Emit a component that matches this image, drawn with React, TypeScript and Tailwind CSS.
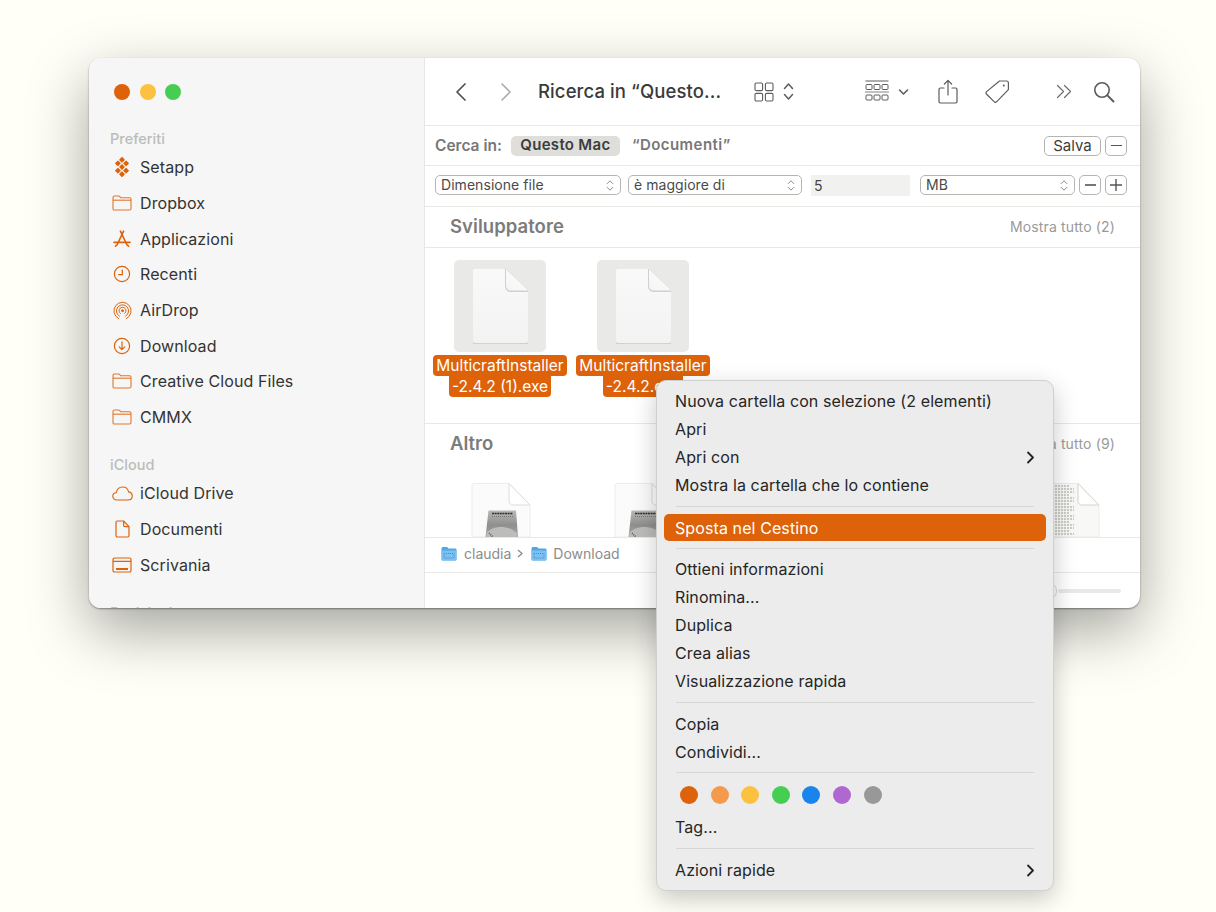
import React from "react";

const O = "#dd6209";

const Folder = () => (
  <svg width="20" height="16" viewBox="0 0 20 16" fill="none" stroke={O} strokeWidth="1.1" opacity="0.85">
    <path d="M1 13.5V2.5C1 1.7 1.6 1 2.4 1H6.5C7.2 1 7.6 1.3 8 1.8L8.7 2.8H17.6C18.4 2.8 19 3.4 19 4.2V13.5C19 14.3 18.4 15 17.6 15H2.4C1.6 15 1 14.3 1 13.5Z" />
    <path d="M1 5.2H19" />
  </svg>
);
const Setapp = () => (
  <svg width="16" height="20" viewBox="0 0 16 20" fill={O}>
    {[[8, 2.8], [3.9, 6.4], [12.1, 6.4], [8, 10], [3.9, 13.6], [12.1, 13.6], [8, 17.2]].map(([x, y], i) => (
      <rect key={i} x={x - 2.15} y={y - 2.15} width="4.3" height="4.3" rx="0.5" transform={`rotate(45 ${x} ${y})`} />
    ))}
  </svg>
);
const Apps = () => (
  <svg width="18" height="18" viewBox="0 0 18 18" fill="none" stroke={O} strokeWidth="1.6" strokeLinecap="round">
    <path d="M7.4 1.2 14 15" />
    <path d="M10.6 1.2 4 15" />
    <path d="M1 12.4H17" />
    <path d="M2.4 16.2 3.2 15.4M15.6 16.2 14.8 15.4" />
  </svg>
);
const Clock = () => (
  <svg width="18" height="18" viewBox="0 0 18 18" fill="none" stroke={O} strokeWidth="1.2">
    <circle cx="9" cy="9" r="7.6" />
    <path d="M9.3 4.5V9.6H5.2" />
  </svg>
);
const AirDrop = () => (
  <svg width="19" height="19" viewBox="0 0 19 19" fill="none" stroke={O} strokeWidth="1" strokeLinecap="round">
    <path d="M5.6 17.6A8.6 8.6 0 1 1 13.4 17.6" />
    <path d="M6.4 15.2A6.1 6.1 0 1 1 12.6 15.2" />
    <path d="M7.4 12.6A3.5 3.5 0 1 1 11.6 12.6" />
    <circle cx="9.5" cy="9.7" r="1" fill={O} />
  </svg>
);
const DownloadIco = () => (
  <svg width="18" height="18" viewBox="0 0 18 18" fill="none" stroke={O} strokeWidth="1.2" strokeLinecap="round" strokeLinejoin="round">
    <circle cx="9" cy="9" r="7.6" />
    <path d="M9 4.8V12.6M6.2 9.9 9 12.7 11.8 9.9" />
  </svg>
);
const Cloud = () => (
  <svg width="21" height="15" viewBox="0 0 21 15" fill="none" stroke={O} strokeWidth="1.1">
    <path d="M5 14C2.6 14 .8 12.4 .8 10.3 .8 8.3 2.3 6.9 4.2 6.8 5 3.2 7.6 1 10.7 1 13.6 1 15.9 3 16.6 5.9 18.6 6.2 20.2 7.9 20.2 10 20.2 12.3 18.4 14 16 14Z" />
  </svg>
);
const Doc = () => (
  <svg width="15" height="18" viewBox="0 0 15 18" fill="none" stroke={O} strokeWidth="1.2" strokeLinejoin="round">
    <path d="M1 2.4C1 1.6 1.6 1 2.4 1H8.6L14 6.6V15.6C14 16.4 13.4 17 12.6 17H2.4C1.6 17 1 16.4 1 15.6Z" />
    <path d="M8.6 1V5.2C8.6 6 9.2 6.6 10 6.6H14" />
  </svg>
);
const Desk = () => (
  <svg width="20" height="16" viewBox="0 0 20 16" fill="none" stroke={O} strokeWidth="1.2">
    <rect x="1" y="1" width="18" height="14" rx="1.6" />
    <path d="M1 4.4H19" />
    <path d="M4 12H16" strokeWidth="1.8" />
  </svg>
);

const favorites: [React.ReactNode, string][] = [
  [<Setapp />, "Setapp"],
  [<Folder />, "Dropbox"],
  [<Apps />, "Applicazioni"],
  [<Clock />, "Recenti"],
  [<AirDrop />, "AirDrop"],
  [<DownloadIco />, "Download"],
  [<Folder />, "Creative Cloud Files"],
  [<Folder />, "CMMX"],
];
const icloud: [React.ReactNode, string][] = [
  [<Cloud />, "iCloud Drive"],
  [<Doc />, "Documenti"],
  [<Desk />, "Scrivania"],
];

const SideRow = ({ icon, label }: { icon: React.ReactNode; label: string }) => (
  <div className="flex h-[35.7px] items-center">
    <div className="flex w-[24px] -ml-[3px] mr-[6px] justify-center">{icon}</div>
    <span className="text-[16px] text-[#333333] tracking-[0.1px]">{label}</span>
  </div>
);

const Updown = () => (
  <svg width="8" height="13" viewBox="0 0 8 13" fill="none" stroke="#8c8c8c" strokeWidth="1" strokeLinecap="round" strokeLinejoin="round">
    <path d="M1.2 4.6 4 1.8 6.8 4.6M1.2 8.4 4 11.2 6.8 8.4" />
  </svg>
);

const Select = ({ label, w }: { label: string; w: string }) => (
  <div className={`flex h-[20px] items-center justify-between rounded-[5px] border border-[#b5b5b0] bg-white pl-[5px] pr-[6px] text-[14px] leading-none tracking-[0.05px] text-[#4a4a4a] ${w}`}>
    <span>{label}</span>
    <Updown />
  </div>
);

const BlankFile = () => (
  <svg width="57" height="75" viewBox="0 0 57 75">
    <defs>
      <linearGradient id="blankBody" x1="0" y1="0" x2="0" y2="1">
        <stop offset="0" stopColor="#f9f9f9" />
        <stop offset="1" stopColor="#f3f3f3" />
      </linearGradient>
      <linearGradient id="blankFold" x1="0" y1="1" x2="1" y2="0">
        <stop offset="0" stopColor="#f4f4f4" />
        <stop offset="1" stopColor="#ffffff" />
      </linearGradient>
    </defs>
    <path d="M1 73.5H56V75H1Z" fill="#d2d2cf" />
    <path d="M3 0H34L56 22V71C56 72.6 54.8 74 53 74H4C2.2 74 1 72.6 1 71V2C1 .8 1.8 0 3 0Z" fill="url(#blankBody)" />
    <path d="M33 0V17C33 20.4 35.2 23 38.6 23H56V21.6L34.4 0Z" fill="#d0d0cd" />
    <path d="M34 0 56 21.6H39C36 21.6 34 19.6 34 16.6Z" fill="url(#blankFold)" />
  </svg>
);

const FileTile = ({ line2 }: { line2: string }) => (
  <div className="flex w-[134px] flex-col items-center">
    <div className="flex h-[92px] w-[92px] items-center justify-center rounded-[5px] bg-[#e9e9e7]">
      <BlankFile />
    </div>
    <div className="mt-[3px] flex flex-col items-center text-[15.5px] leading-[21px] text-white">
      <span className="rounded-[4px] bg-[#dd6209] px-[3px]">MulticraftInstaller</span>
      <span className="rounded-b-[4px] bg-[#dd6209] px-[3px]">{line2}</span>
    </div>
  </div>
);

const DiskFile = () => (
  <svg width="60" height="54" viewBox="0 0 60 54">
    <defs>
      <linearGradient id="disk" x1="0" y1="0" x2="0" y2="1">
        <stop offset="0" stopColor="#b8b8b6" />
        <stop offset="0.55" stopColor="#8f8f8d" />
        <stop offset="1" stopColor="#a8a8a6" />
      </linearGradient>
    </defs>
    <path d="M3 .5H38L59 22V54H1V3C1 1.5 1.6 .5 3 .5Z" fill="#fbfbfb" stroke="#ecece9" />
    <path d="M38 .5 59 22H42C39.6 22 38 20.4 38 18Z" fill="#ffffff" stroke="#dcdcd9" />
    <path d="M17.5 27.5H45L47 54H14.5Z" fill="url(#disk)" />
    <path d="M21 30.5H42" stroke="#2e2e2e" strokeWidth="1.6" strokeDasharray="2 .6" />
    <path d="M21 33.5H42" stroke="#777" strokeWidth="1" strokeDasharray="1 1" />
    <path d="M15.5 50C22 42 38 42 46 50V54H15.5Z" fill="#bcbcba" />
    <path d="M18 50 22 54" stroke="#555" strokeWidth="1.5" strokeDasharray="1 1" />
  </svg>
);

const TextFile = () => (
  <svg width="60" height="54" viewBox="0 0 60 54">
    <path d="M3 .5H38L59 22V54H1V3C1 1.5 1.6 .5 3 .5Z" fill="#f8f8f7" stroke="#ecece9" />
    {Array.from({ length: 17 }).map((_, i) => (
      <path key={i} d={`M6 ${3 + i * 3}H${i % 3 === 0 ? 30 : 34}`} stroke="#bdbdbb" strokeWidth="1.5" strokeDasharray="2 1" />
    ))}
    <path d="M38 .5 59 22H42C39.6 22 38 20.4 38 18Z" fill="#ffffff" stroke="#d2d2cf" />
  </svg>
);

const BlueFolder = () => (
  <svg width="16" height="15" viewBox="0 0 16 15">
    <path d="M.5 3C.5 1.8 1 1 2 1H5.6C6.4 1 6.8 1.6 7.4 2.4H14C15 2.4 15.5 3 15.5 4V13C15.5 14 15 14.5 14 14.5H2C1 14.5 .5 14 .5 13Z" fill="#4fa6e8" />
    <path d="M.5 4.6H15.5V13C15.5 14 15 14.5 14 14.5H2C1 14.5 .5 14 .5 13Z" fill="#7cc0f0" />
    <path d="M3 7.5H13V12H3Z" fill="none" stroke="#3d8fd0" strokeDasharray="1 1" />
  </svg>
);

const Item = ({ children }: { children: React.ReactNode }) => (
  <div className="flex h-[28px] items-center justify-between pl-[18px] pr-[18px] text-[16px] tracking-[0.1px] text-[#252525]">
    {children}
  </div>
);
const Sep = ({ className }: { className: string }) => <div className={`mx-[19px] h-px bg-[#d6d6d2] ${className}`} />;
const Chevron = () => (
  <svg width="9" height="13" viewBox="0 0 9 13" fill="none" stroke="#222" strokeWidth="1.8" strokeLinecap="round" strokeLinejoin="round">
    <path d="M2 1.5 7 6.5 2 11.5" />
  </svg>
);

const tags = ["#dd6209", "#f39a4c", "#fcc23f", "#45ce52", "#1a84ec", "#b067d2", "#989898"];

export default function App() {
  return (
    <div
      className="relative h-[912px] w-[1216px] overflow-hidden bg-[#fffff7] pl-[89px] pt-[58px]"
      style={{ fontFamily: 'Inter, "Liberation Sans", sans-serif' }}
    >
      {/* Window */}
      <div className="flex h-[550px] w-[1051px] overflow-hidden rounded-[12px] bg-white shadow-[0_22px_60px_rgba(0,0,0,0.36),0_1px_2px_rgba(0,0,0,0.4)]">
        {/* Sidebar */}
        <div className="w-[336px] shrink-0 border-r border-[#e6e6e4] bg-[#f6f6f6] pl-[24px]">
          <div className="flex gap-[9.5px] pl-[1px] pt-[25.5px]">
            <div className="h-[16px] w-[16px] rounded-full bg-[#dd6209]" />
            <div className="h-[16px] w-[16px] rounded-full bg-[#fcc23f]" />
            <div className="h-[16px] w-[16px] rounded-full bg-[#45ce52]" />
          </div>
          <div className="ml-[-3px] mt-[30.5px] h-[18px] text-[14.5px] font-medium leading-[18px] text-[#bcbcba]">Preferiti</div>
          <div className="mt-[1.5px]">
            {favorites.map(([i, l]) => (
              <SideRow key={l} icon={i} label={l} />
            ))}
          </div>
          <div className="ml-[-3px] mt-[21px] h-[18px] text-[14.5px] font-medium leading-[18px] text-[#bcbcba]">iCloud</div>
          <div className="mt-[1.5px]">
            {icloud.map(([i, l]) => (
              <SideRow key={l} icon={i} label={l} />
            ))}
          </div>
          <div className="ml-[-3px] mt-[21px] h-[18px] text-[14.5px] font-medium leading-[18px] text-[#bcbcba]">Posizioni</div>
        </div>

        {/* Main */}
        <div className="flex min-w-0 flex-1 flex-col">
          {/* Toolbar */}
          <div className="flex h-[68px] shrink-0 items-center border-b border-[#e8e8e6] pl-[29px] pr-[25px]">
            <svg width="13" height="20" viewBox="0 0 13 20" fill="none" stroke="#4f4f4f" strokeWidth="1.7" strokeLinecap="round" strokeLinejoin="round">
              <path d="M11 2 3 10 11 18" />
            </svg>
            <svg className="ml-[33px]" width="13" height="20" viewBox="0 0 13 20" fill="none" stroke="#adadad" strokeWidth="1.7" strokeLinecap="round" strokeLinejoin="round">
              <path d="M2 2 10 10 2 18" />
            </svg>
            <span className="ml-[25px] w-[216px] text-[18.5px] font-medium tracking-[0.1px] text-[#3a3a3a]">Ricerca in “Questo...</span>
            <svg width="20" height="20" viewBox="0 0 20 20" fill="none" stroke="#5c5c5c" strokeWidth="1.1">
              <rect x="1" y="1" width="7.6" height="7.6" rx="1.4" />
              <rect x="11.4" y="1" width="7.6" height="7.6" rx="1.4" />
              <rect x="1" y="11.4" width="7.6" height="7.6" rx="1.4" />
              <rect x="11.4" y="11.4" width="7.6" height="7.6" rx="1.4" />
            </svg>
            <svg className="ml-[9px]" width="11" height="19" viewBox="0 0 11 19" fill="none" stroke="#5c5c5c" strokeWidth="1.5" strokeLinecap="round" strokeLinejoin="round">
              <path d="M1.5 6.5 5.5 2 9.5 6.5M1.5 12.5 5.5 17 9.5 12.5" />
            </svg>
            <svg className="ml-[71px]" width="24" height="23" viewBox="0 0 24 23" fill="none" stroke="#5c5c5c" strokeWidth="1">
              <path d="M.5 1H23.5" />
              <rect x="1" y="4.5" width="6" height="5" rx="1" />
              <rect x="9" y="4.5" width="6" height="5" rx="1" />
              <rect x="17" y="4.5" width="6" height="5" rx="1" />
              <path d="M.5 12H23.5" strokeDasharray="1 1" strokeWidth="1.4" />
              <rect x="1" y="15" width="6" height="5" rx="1" />
              <rect x="9" y="15" width="6" height="5" rx="1" />
              <rect x="17" y="15" width="6" height="5" rx="1" />
            </svg>
            <svg className="ml-[9px]" width="11" height="8" viewBox="0 0 11 8" fill="none" stroke="#5c5c5c" strokeWidth="1.6" strokeLinecap="round" strokeLinejoin="round">
              <path d="M1.5 2 5.5 6 9.5 2" />
            </svg>
            <svg className="ml-[29px]" width="20" height="25" viewBox="0 0 20 25" fill="none" stroke="#5c5c5c" strokeWidth="1.2" strokeLinecap="round" strokeLinejoin="round">
              <path d="M6 9H2.4C1.6 9 1 9.6 1 10.4V22.6C1 23.4 1.6 24 2.4 24H17.6C18.4 24 19 23.4 19 22.6V10.4C19 9.6 18.4 9 17.6 9H14" />
              <path d="M10 16V1.5M6.4 5 10 1.4 13.6 5" />
            </svg>
            <svg className="ml-[26px]" width="26" height="25" viewBox="0 0 26 25" fill="none" stroke="#5c5c5c" strokeWidth="1.2" strokeLinejoin="round">
              <path d="M15.5 2H22.5C23.6 2 24.4 2.8 24.4 3.9V10.6L12.8 22.6C12 23.4 10.9 23.4 10.1 22.6L2.6 15.2C1.8 14.4 1.8 13.4 2.6 12.6Z" />
              <circle cx="19.8" cy="6.6" r="1" fill="#5c5c5c" stroke="none" />
            </svg>
            <svg className="ml-[46px]" width="16" height="15" viewBox="0 0 16 15" fill="none" stroke="#6a6a6a" strokeWidth="1.2" strokeLinecap="round" strokeLinejoin="round">
              <path d="M1.5 1.5 7.5 7.5 1.5 13.5M8.5 1.5 14.5 7.5 8.5 13.5" />
            </svg>
            <svg className="ml-[21px]" width="22" height="22" viewBox="0 0 22 22" fill="none" stroke="#5c5c5c" strokeWidth="1.6" strokeLinecap="round">
              <circle cx="9" cy="9" r="7.2" />
              <path d="M14.4 14.4 20.5 20.5" strokeWidth="2" />
            </svg>
          </div>

          {/* Search scope */}
          <div className="flex h-[40px] shrink-0 items-center border-b border-[#e8e8e6] pl-[10px] pr-[13px]">
            <span className="text-[15.5px] font-semibold text-[#777777]">Cerca in:</span>
            <span className="ml-[9px] flex h-[20px] w-[109px] items-center justify-center rounded-[5px] bg-[#dededb] text-[15px] font-semibold tracking-[0.3px] text-[#3c3c3c]">Questo Mac</span>
            <span className="ml-[12px] text-[15px] font-semibold tracking-[0.45px] text-[#777777]">“Documenti”</span>
            <div className="ml-auto flex h-[20px] w-[57px] items-center justify-center rounded-[5px] border border-[#b5b5b0] text-[15px] leading-none text-[#3c3c3c]">Salva</div>
            <div className="ml-[4px] flex h-[20px] w-[22px] items-center justify-center rounded-[5px] border border-[#b5b5b0]">
              <div className="h-[1.5px] w-[11px] bg-[#555]" />
            </div>
          </div>

          {/* Criteria */}
          <div className="flex h-[41px] shrink-0 items-center border-b border-[#e8e8e6] pb-[2px] pl-[10px] pr-[13px]">
            <Select label="Dimensione file" w="w-[186px]" />
            <div className="ml-[7px]"><Select label="è maggiore di" w="w-[174px]" /></div>
            <div className="ml-[9px] flex h-[21px] w-[99px] items-center bg-[#f1f1f0] pl-[3px] text-[14px] text-[#444]">5</div>
            <div className="ml-[10px]"><Select label="MB" w="w-[155px]" /></div>
            <div className="ml-[4px] flex h-[20px] w-[22px] items-center justify-center rounded-[5px] border border-[#b5b5b0]">
              <div className="h-[1.5px] w-[11px] bg-[#777]" />
            </div>
            <div className="ml-[4px] flex h-[20px] w-[22px] items-center justify-center rounded-[5px] border border-[#b5b5b0]">
              <svg width="12" height="12" viewBox="0 0 12 12" stroke="#555" strokeWidth="1.4"><path d="M6 0V12M0 6H12" /></svg>
            </div>
          </div>

          {/* Section Sviluppatore */}
          <div className="flex h-[40.5px] shrink-0 items-center justify-between border-b border-[#e8e8e6] pl-[25px] pr-[25px]">
            <span className="text-[18.5px] font-semibold tracking-[0.05px] text-[#7c7c7c]">Sviluppatore</span>
            <span className="text-[14px] tracking-[0.15px] text-[#9a9a9a]">Mostra tutto (2)</span>
          </div>
          <div className="flex h-[176.5px] shrink-0 gap-[9px] border-b border-[#e8e8e6] pl-[8px] pt-[12.5px]">
            <FileTile line2="-2.4.2 (1).exe" />
            <FileTile line2="-2.4.2.exe" />
          </div>

          {/* Section Altro */}
          <div className="flex h-[38px] shrink-0 items-center justify-between pl-[25px] pr-[25px] pt-[1px]">
            <span className="text-[18.5px] font-semibold text-[#7c7c7c]">Altro</span>
            <span className="text-[14px] tracking-[0.15px] text-[#9a9a9a]">Mostra tutto (9)</span>
          </div>
          <div className="flex h-[75px] shrink-0 items-end gap-[83px] overflow-hidden pl-[46px]">
            <DiskFile />
            <DiskFile />
            <div className="ml-[283px] flex items-end"><TextFile /></div>
          </div>

          {/* Path bar */}
          <div className="flex h-[36px] shrink-0 items-center border-y border-[#e8e8e6] pb-[3px] pl-[16px] text-[14px] text-[#8c8c8c]">
            <BlueFolder />
            <span className="ml-[7px]">claudia</span>
            <svg className="ml-[6px]" width="6" height="9" viewBox="0 0 6 9" fill="none" stroke="#8c8c8c" strokeWidth="1.3"><path d="M1 1 5 4.5 1 8" /></svg>
            <span className="ml-[8px]"><BlueFolder /></span>
            <span className="ml-[6px]">Download</span>
          </div>

          {/* Status bar */}
          <div className="flex flex-1 items-center justify-end pr-[19px]">
            <div className="h-[18px] w-[18px] rounded-full border border-[#d6d6d4] bg-white" />
            <div className="ml-px h-[4px] w-[63px] rounded-full bg-[#e9e9e7]" />
          </div>
        </div>
      </div>

      {/* Context menu */}
      <div className="absolute left-[656px] top-[380px] w-[398px] rounded-[10px] border border-[#d0d0cc] bg-[#ececec] pb-[6px] pt-[6px] shadow-[0_8px_24px_rgba(0,0,0,0.22)]">
        <Item>Nuova cartella con selezione (2 elementi)</Item>
        <Item>Apri</Item>
        <Item>Apri con<Chevron /></Item>
        <Item>Mostra la cartella che lo contiene</Item>
        <Sep className="mb-[7px] mt-[7px]" />
        <div className="mx-[7px] flex h-[27px] items-center rounded-[5px] bg-[#dd6209] pl-[11px] text-[16px] tracking-[0.1px] text-white">Sposta nel Cestino</div>
        <Sep className="mb-[6px] mt-[7px]" />
        <Item>Ottieni informazioni</Item>
        <Item>Rinomina...</Item>
        <Item>Duplica</Item>
        <Item>Crea alias</Item>
        <Item>Visualizzazione rapida</Item>
        <Sep className="mb-[7px] mt-[6.5px]" />
        <Item>Copia</Item>
        <Item>Condividi...</Item>
        <Sep className="mb-[7px] mt-[6px]" />
        <div className="flex h-[30px] items-center gap-[12.6px] pl-[23px]">
          {tags.map((c) => (
            <div key={c} className="h-[18px] w-[18px] rounded-full" style={{ backgroundColor: c }} />
          ))}
        </div>
        <div className="mt-[3px]"><Item>Tag...</Item></div>
        <Sep className="mb-[7px] mt-[7.5px]" />
        <Item>Azioni rapide<Chevron /></Item>
      </div>
    </div>
  );
}
